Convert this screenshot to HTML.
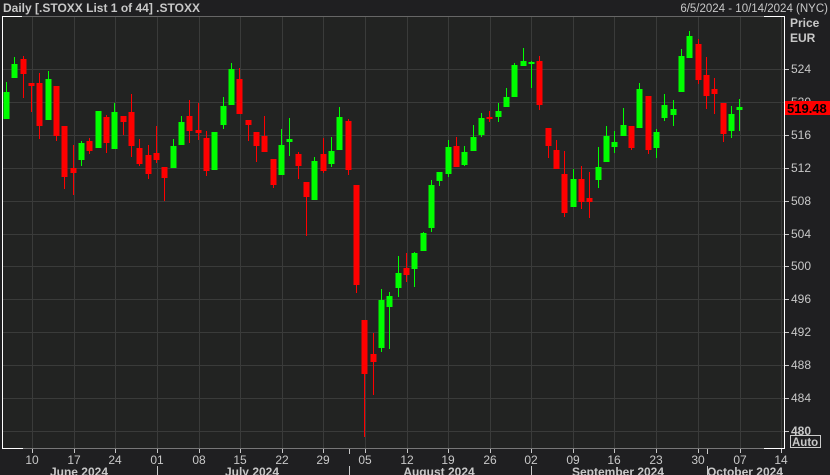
<!DOCTYPE html>
<html><head><meta charset="utf-8"><style>
html,body{margin:0;padding:0;background:#1f1f21;width:830px;height:475px;overflow:hidden;font-family:"Liberation Sans",Tahoma,sans-serif}
svg{position:absolute;left:0;top:0}
</style></head><body>
<svg id="s" width="830" height="475" xmlns="http://www.w3.org/2000/svg">
<rect x="0" y="0" width="830" height="475" fill="#1f1f21"/>
<rect x="2" y="16" width="782" height="432" fill="#222322"/>
<g id="grid" stroke="#3a3b3a" stroke-width="1"></g>
<g id="c"></g>
<line x1="2.5" y1="16" x2="2.5" y2="448" stroke="#fff"/>
<line x1="2" y1="16.5" x2="22" y2="16.5" stroke="#fff"/>
<line x1="22" y1="16.5" x2="764" y2="16.5" stroke="#666"/>
<line x1="764" y1="16.5" x2="785" y2="16.5" stroke="#fff"/>
<line x1="784.5" y1="16" x2="784.5" y2="448" stroke="#fff"/>
<line x1="2" y1="448.5" x2="23" y2="448.5" stroke="#fff"/>
<line x1="23" y1="448.5" x2="764" y2="448.5" stroke="#777"/>
<line x1="764" y1="448.5" x2="785" y2="448.5" stroke="#fff"/>
<g font-size="12" fill="#c8c8c8">
<text x="3" y="12" font-weight="bold" font-size="12">Daily [.STOXX List 1 of 44] .STOXX</text>
<text x="828" y="12" text-anchor="end" font-size="11.5">6/5/2024 - 10/14/2024 (NYC)</text>
<text x="790" y="27" font-weight="bold">Price</text>
<text x="790" y="42" font-weight="bold">EUR</text>
</g>
<g id="ax" font-size="12" fill="#c8c8c8"></g>
<rect x="785" y="101" width="45" height="14" fill="#ff0000"/>
<text x="787" y="113" font-size="13" font-weight="bold" fill="#000">519.48</text>
<rect x="790.5" y="435.5" width="30" height="12" fill="none" stroke="#ccc"/>
<text x="792" y="446" font-size="11.5" font-weight="bold" fill="#c8c8c8">Auto</text>
<g id="bx" font-size="12" fill="#c8c8c8"></g>
</svg>
<script>
var NS="http://www.w3.org/2000/svg";
function el(p,t,a,txt){var e=document.createElementNS(NS,t);for(var k in a)e.setAttribute(k,a[k]);if(txt)e.textContent=txt;document.getElementById(p).appendChild(e);}
var wx=[32,74,115,157,199,240,282,323,365,407,448,490,531,573,614,656,698,740,781];
var wl=["10","17","24","01","08","15","22","29","05","12","19","26","02","09","16","23","30","07","14"];
wx.forEach(function(x,i){el("grid","line",{x1:x+.5,y1:17,x2:x+.5,y2:448});
el("bx","line",{x1:x+.5,y1:449,x2:x+.5,y2:453,stroke:"#c8c8c8"});
el("bx","text",{x:x,y:464,"text-anchor":"middle"},wl[i]);});
var ys=[[524,69],[520,102],[516,135],[512,168],[508,201],[504,234],[500,266],[496,299],[492,332],[488,365],[484,398],[480,431]];
ys.forEach(function(v){el("grid","line",{x1:3,y1:v[1]+.5,x2:784,y2:v[1]+.5});
el("ax","line",{x1:785,y1:v[1]+.5,x2:789,y2:v[1]+.5,stroke:"#c8c8c8"});
el("ax","text",{x:791,y:v[1]+4,"font-weight":v[0]==480?"bold":"normal"},String(v[0]));});
[349,707].forEach(function(x){el("bx","line",{x1:x+.5,y1:449,x2:x+.5,y2:454,stroke:"#c8c8c8"});});
[157,349,531,707].forEach(function(x){el("bx","line",{x1:x+.5,y1:466,x2:x+.5,y2:475,stroke:"#c8c8c8"});});
[["June 2024",79],["July 2024",252],["August 2024",439],["September 2024",618],["October 2024",745]].forEach(function(m){
el("bx","text",{x:m[1],y:476,"text-anchor":"middle","font-weight":"bold"},m[0]);});
// x, bodyTop, bodyBot, wickTop, wickBot, green?
var C=[[6,92,119,82,119,1],[14,64,78,57,78,1],[23,59,74,56,98,0],[31,83,86,83,112,0],[39,83,126,73,139,0],[48,79,120,71,120,1],[56,86,136,86,141,0],[64,126,177,126,189,0],[73,168,173,145,195,0],[81,143,160,141,166,1],[89,141,151,138,154,0],[98,111,148,111,148,1],[106,117,143,115,153,0],[114,112,149,103,149,1],[123,116,122,116,135,0],[131,112,146,94,157,0],[139,148,164,139,166,0],[148,155,174,145,179,0],[156,153,160,126,163,0],[164,167,178,167,201,0],[173,146,168,139,168,1],[181,122,145,116,145,1],[189,116,131,100,143,0],[198,130,133,103,140,0],[206,138,171,131,176,0],[214,132,170,132,170,1],[223,106,125,97,129,1],[231,69,105,63,105,1],[239,79,114,68,114,0],[248,120,125,120,141,0],[256,132,146,132,162,0],[264,136,152,116,152,0],[273,159,185,159,188,0],[281,145,175,129,175,1],[289,139,142,118,156,1],[298,154,166,152,179,0],[306,182,197,182,236,0],[314,161,200,157,200,1],[323,154,171,138,173,0],[331,151,164,137,167,1],[339,117,150,107,150,1],[348,121,170,119,175,0],[356,185,285,185,293,0],[364,320,374,320,437,0],[373,354,362,333,395,0],[381,300,348,289,352,1],[389,296,307,292,349,1],[398,273,288,256,297,1],[406,268,275,253,282,0],[414,253,269,252,287,1],[423,233,251,232,251,1],[431,185,228,180,232,1],[439,172,181,172,186,1],[448,147,174,140,177,1],[456,146,167,137,167,0],[464,152,165,146,166,1],[473,137,151,125,151,1],[481,118,135,113,137,1],[489,117,119,111,122,0],[498,111,117,103,122,1],[506,97,107,88,107,1],[514,65,97,63,97,1],[523,61,66,48,66,1],[531,62,64,61,88,1],[539,61,105,56,110,0],[548,128,146,128,158,0],[556,150,169,140,169,0],[564,174,213,151,217,0],[573,179,207,169,207,1],[581,179,202,166,209,0],[589,198,202,172,218,0],[598,167,180,147,188,1],[606,136,162,126,162,1],[614,142,147,131,153,1],[623,125,136,108,136,1],[631,126,148,126,150,0],[639,89,128,83,128,1],[648,96,150,96,154,0],[656,132,148,129,158,1],[664,105,118,94,121,1],[673,109,115,100,126,1],[681,56,92,49,92,1],[689,36,58,31,58,1],[698,44,80,39,84,0],[706,75,96,57,109,0],[714,89,94,78,114,0],[723,103,134,103,142,0],[731,114,131,106,138,1],[739,107,110,99,131,1]];
C.forEach(function(c){var col=c[5]?"#00ff00":"#ff0000";
el("c","rect",{x:c[0],y:c[3],width:1,height:Math.max(1,c[4]-c[3]),fill:col});
el("c","rect",{x:c[0]-2.5,y:c[1],width:6,height:Math.max(2,c[2]-c[1]),fill:col});});
</script>
</body></html>
